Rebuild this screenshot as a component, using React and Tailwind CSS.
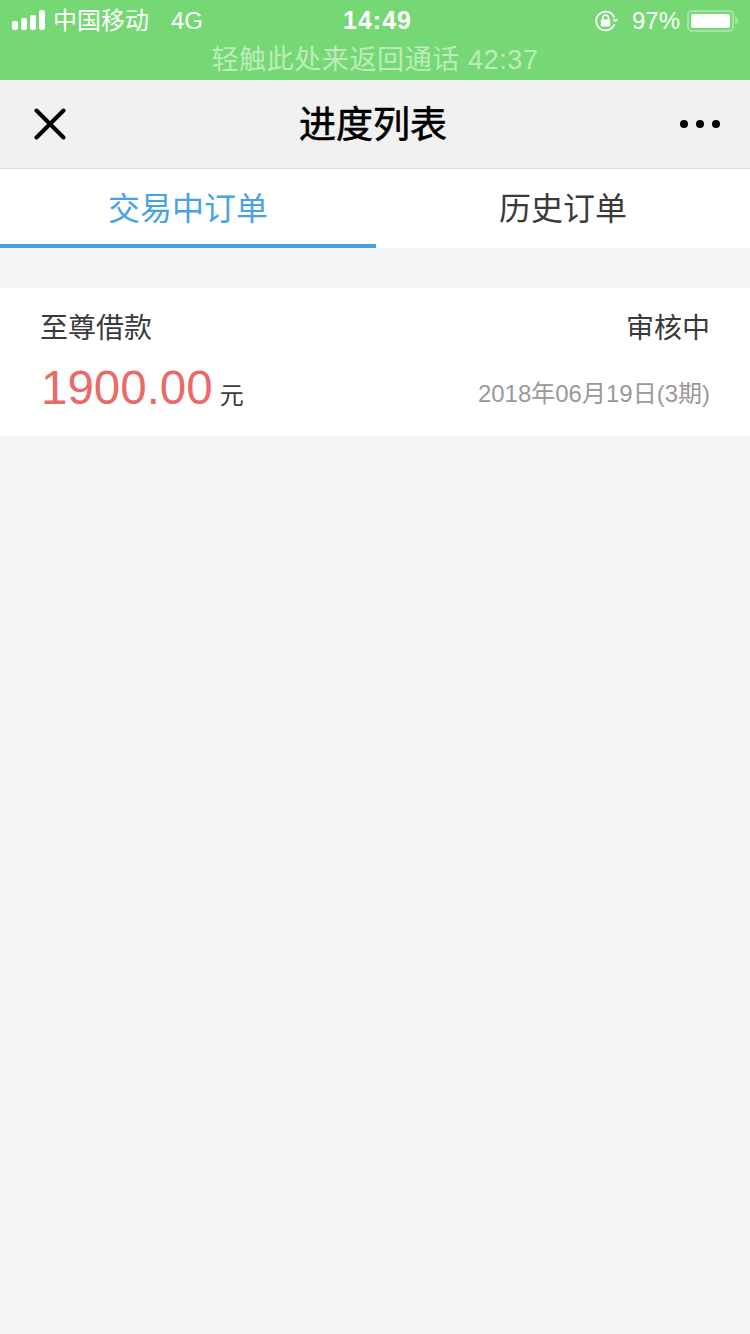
const sans = { fontFamily: '"Liberation Sans", "Noto Sans CJK SC", sans-serif' };

function Signal() {
  return (
    <svg width="33" height="20" viewBox="0 0 33 20" className="block -mt-[1px]">
      <rect x="0" y="11" width="6" height="9" rx="2" fill="#fff" />
      <rect x="9" y="8" width="6" height="12" rx="2" fill="#fff" />
      <rect x="18" y="5" width="6" height="15" rx="2" fill="#fff" />
      <rect x="27" y="0" width="6" height="20" rx="2.5" fill="#fff" />
    </svg>
  );
}

function RotationLock() {
  return (
    <svg width="24" height="22" viewBox="0 0 24 22" className="block ml-[1px]">
      <path d="M19.3 7.5A9.4 9.4 0 1 0 19.5 14" fill="none" stroke="#fff" strokeWidth="1.8" />
      <path d="M17.2 9.2h6.3l-3.1 3.1z" fill="#fff" />
      <rect x="5.8" y="9.5" width="9.5" height="7" rx="1" fill="#fff" />
      <path d="M7.8 10V7.8a2.8 2.8 0 0 1 5.6 0V10" fill="none" stroke="#fff" strokeWidth="1.5" />
    </svg>
  );
}

function Battery() {
  return (
    <div className="flex items-center">
      <div className="w-[47px] h-[22px] rounded-[5px] border-2 border-[#a5e4a5] p-[2px]">
        <div className="w-[39px] h-full bg-white rounded-[2px]" />
      </div>
      <div className="w-[3px] h-[7px] ml-[1px] rounded-r-full bg-[#a5e4a5]" />
    </div>
  );
}

export default function App() {
  return (
    <div className="min-h-[1334px] bg-[#f4f4f4] flex flex-col" style={sans}>
      <div className="h-[80px] bg-[#76d875] flex flex-col">
        <div className="h-[40px] pl-[12px] pr-[12px] pt-[1px] grid grid-cols-3 items-center text-white">
          <div className="flex items-center">
            <Signal />
            <span className="ml-[8px] text-[24px] leading-none">中国移动</span>
            <span className="ml-[22px] text-[24px] leading-none">4G</span>
          </div>
          <div className="text-center text-[25px] leading-none font-bold tracking-[1px] pl-[5px]">14:49</div>
          <div className="flex items-center justify-end">
            <RotationLock />
            <span className="ml-[13px] text-[24px] leading-none">97%</span>
            <div className="ml-[7px]"><Battery /></div>
          </div>
        </div>
        <div className="h-[40px] flex items-center justify-center text-[27px] leading-none text-[#bcecbb] tracking-[0.6px]">
          轻触此处来返回通话 42:37
        </div>
      </div>

      <div className="h-[89px] bg-[#f1f1f1] border-b border-[#dedede] flex items-center justify-between pl-[34px] pr-[30px]">
        <svg width="32" height="32" viewBox="0 0 32 32" className="block">
          <path d="M2.5 2.5L29.5 29.5M29.5 2.5L2.5 29.5" stroke="#000" strokeWidth="4" strokeLinecap="round" />
        </svg>
        <div className="text-[37px] leading-none text-black pt-[3px]" style={{ WebkitTextStroke: "0.6px #000" }}>进度列表</div>
        <div className="flex items-center gap-[8px]">
          <span className="w-[8px] h-[8px] rounded-full bg-black" />
          <span className="w-[8px] h-[8px] rounded-full bg-black" />
          <span className="w-[8px] h-[8px] rounded-full bg-black" />
        </div>
      </div>

      <div className="h-[79px] bg-white flex">
        <div className="w-[376px] border-b-[4px] border-[#4a9fe2] flex items-center justify-center text-[32px] leading-none text-[#46a3e6] pt-[4px]">
          交易中订单
        </div>
        <div className="flex-1 flex items-center justify-center text-[32px] leading-none text-[#3a3a3a] pt-[1px]">
          历史订单
        </div>
      </div>

      <div className="mt-[40px] h-[148px] bg-white px-[40px] pt-[25px]">
        <div className="flex items-center justify-between text-[28px] leading-[32px] text-[#3a3a3a]">
          <span>至尊借款</span>
          <span>审核中</span>
        </div>
        <div className="mt-[18px] flex items-end justify-between">
          <div className="flex items-baseline">
            <span className="text-[47.5px] leading-[50px] text-[#e96a68] pl-[1px]">1900.00</span>
            <span className="ml-[7px] text-[24px] leading-none text-[#3a3a3a]">元</span>
          </div>
          <span className="text-[24px] leading-none text-[#999999] mb-[7px]">2018年06月19日(3期)</span>
        </div>
      </div>
    </div>
  );
}
